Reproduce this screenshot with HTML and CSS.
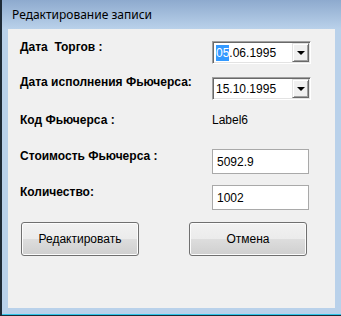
FILE: index.html
```html
<!DOCTYPE html>
<html lang="ru">
<head>
  <meta charset="UTF-8">
  <title>Редактирование записи</title>
  <link rel="stylesheet" href="styles.css">
</head>
<body>

<div class="window">
  <div class="titlebar">Редактирование записи</div>
  <div class="client">
    <div class="row">
      <label class="lbl lbl-up1">Дата&nbsp; Торгов :</label>
      <div class="datebox">
        <span class="datetext"><span class="sel">05</span>.06.1995</span>
        <span class="dropbtn"><span class="arrow"></span></span>
      </div>
    </div>

    <div class="row">
      <label class="lbl lbl-up2">Дата исполнения Фьючерса:</label>
      <div class="datebox">
        <span class="datetext">15.10.1995</span>
        <span class="dropbtn"><span class="arrow"></span></span>
      </div>
    </div>

    <div class="row">
      <label class="lbl">Код Фьючерса :</label>
      <span class="value">Label6</span>
    </div>

    <div class="row">
      <label class="lbl">Стоимость Фьючерса :</label>
      <input class="textbox" type="text" value="5092.9">
    </div>

    <div class="row">
      <label class="lbl">Количество:</label>
      <input class="textbox" type="text" value="1002">
    </div>

    <div class="buttons">
      <button class="btn">Редактировать</button>
      <button class="btn">Отмена</button>
    </div>
  </div>
</div>

</body>
</html>
```

FILE: styles.css
```css
body {
  margin: 0;
  font-family: "Liberation Sans", Arial, sans-serif;
  font-size: 12px;
  background: #ffffff;
}

.window {
  width: 341px;
  height: 316px;
  box-sizing: border-box;
  background: #b9d1ea;
  border-left: 2px solid #1e2a36;
  border-bottom: 1px solid #1e2a36;
  box-shadow: inset 0 -1px 0 #2ec4e8;
  padding: 0 6px 7px 6px;
  display: flex;
  flex-direction: column;
}

.titlebar {
  height: 29px;
  margin: 0 -6px 0 -6px;
  padding-left: 10px;
  line-height: 29px;
  font-family: "Noto Sans", "Open Sans", sans-serif;
  font-size: 12px;
  color: #000000;
  background: linear-gradient(#8eaace, #b9d1ea);
}

.client {
  flex: 1;
  background: #f0f0f0;
  padding: 12px 0 0 12px;
}

.row {
  display: flex;
  align-items: flex-start;
  height: 36px;
}

.lbl {
  width: 192px;
  font-weight: bold;
  line-height: 14px;
  color: #000000;
}

.lbl-up1 {
  margin-top: -1px;
}

.lbl-up2 {
  margin-top: -2px;
}

.value {
  line-height: 14px;
  color: #000000;
}

.datebox {
  width: 99px;
  height: 23px;
  box-sizing: border-box;
  background: #ffffff;
  border-top: 1px solid #a0a0a0;
  border-left: 1px solid #a0a0a0;
  border-right: 1px solid #ffffff;
  border-bottom: 1px solid #ffffff;
  box-shadow: inset 1px 1px 0 #696969, inset -1px -1px 0 #e3e3e3;
  display: flex;
  align-items: center;
  padding: 2px 1px 1px 3px;
}

.datetext {
  flex: 1;
  font-size: 12px;
  line-height: 16px;
}

.sel {
  background: #3399ff;
  color: #ffffff;
  display: inline-block;
  padding: 1px 0;
  line-height: 14px;
}

.dropbtn {
  width: 17px;
  height: 19px;
  box-sizing: border-box;
  background: #f0f0f0;
  border-top: 1px solid #e3e3e3;
  border-left: 1px solid #e3e3e3;
  border-right: 1px solid #696969;
  border-bottom: 1px solid #696969;
  box-shadow: inset 1px 1px 0 #ffffff, inset -1px -1px 0 #a0a0a0;
  display: flex;
  align-items: center;
  justify-content: center;
  margin-top: -1px;
}

.arrow {
  width: 0;
  height: 0;
  border-left: 4px solid transparent;
  border-right: 4px solid transparent;
  border-top: 4px solid #000000;
  margin-top: 1px;
}

.textbox {
  width: 97px;
  height: 25px;
  box-sizing: border-box;
  border: 1px solid #a9a9a9;
  background: #ffffff;
  padding: 1px 0 0 4px;
  font-family: "Liberation Sans", Arial, sans-serif;
  font-size: 12px;
  color: #000000;
  outline: none;
}

.buttons {
  display: flex;
  gap: 50px;
  padding-left: 1px;
  margin-top: 1px;
}

.btn {
  width: 118px;
  height: 34px;
  border: 1px solid #707070;
  border-radius: 3px;
  background: linear-gradient(#f2f2f2 0%, #ebebeb 50%, #dddddd 51%, #cfcfcf 100%);
  box-shadow: inset 0 0 0 1px #fcfcfc;
  font-family: "Liberation Sans", Arial, sans-serif;
  font-size: 12px;
  color: #000000;
  padding: 0;
}
```
